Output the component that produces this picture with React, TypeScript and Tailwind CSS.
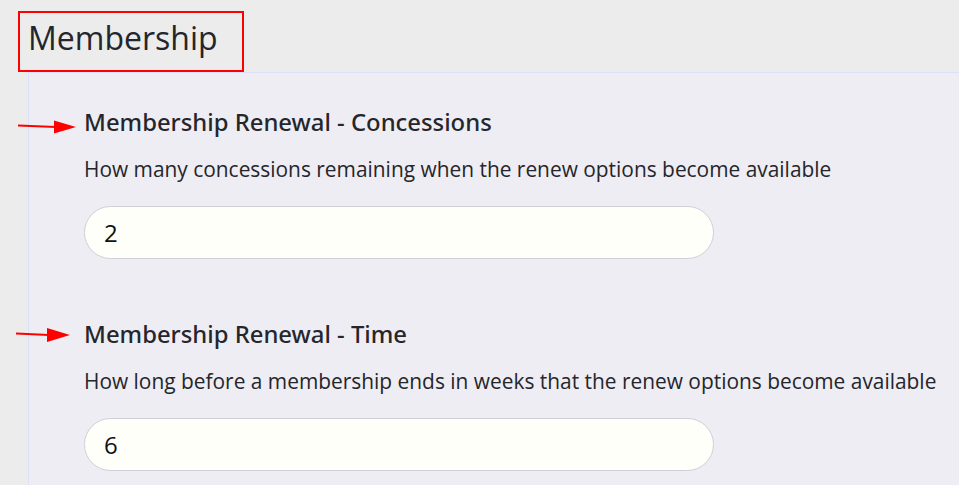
import React from 'react';

const font = { fontFamily: '"Open Sans", "Noto Sans", sans-serif' };
const headFont = { fontFamily: '"Noto Sans", "Open Sans", sans-serif' };

const Setting = ({ title, hint, value }: { title: string; hint: string; value: string }) => (
  <div className="pb-[59px]">
    <h3 className="text-[23.85px] font-medium text-[#25262b] leading-[32px]" style={headFont}>
      {title}
    </h3>
    <p className="mt-[17px] text-[20.9px] text-[#25262b] leading-[28px]">{hint}</p>
    <input
      defaultValue={value}
      className="block mt-[23px] w-[630px] h-[53px] rounded-full border border-[#cdd0d8] bg-[#fffffa] px-[19px] text-[24px] text-[#111] outline-none"
      style={font}
    />
  </div>
);

export default function App() {
  return (
    <div className="relative h-[485px] bg-[#ececec] overflow-hidden" style={font}>
      <div className="pl-[18px] pt-[11px]">
        <div className="w-[226px] h-[61px] border-2 border-[#ff0000] pl-[8px] pt-[9px]">
          <h1 className="text-[32px] text-[#23262b] leading-[32px]">Membership</h1>
        </div>
      </div>
      <div className="ml-[28px] border-l border-t border-[#dde0fa] bg-[#eeedf3] pl-[55px] pt-[33px]">
        <Setting
          title="Membership Renewal - Concessions"
          hint="How many concessions remaining when the renew options become available"
          value="2"
        />
        <Setting
          title="Membership Renewal - Time"
          hint="How long before a membership ends in weeks that the renew options become available"
          value="6"
        />
      </div>
      {/* annotation arrows */}
      <svg className="absolute left-0 top-0 pointer-events-none" width="100" height="360">
        <line x1="18" y1="125.5" x2="56" y2="127" stroke="#ff0000" strokeWidth="2" />
        <polygon points="54,120.5 76,127 54,133.5" fill="#ff0000" />
        <line x1="16" y1="333.5" x2="49" y2="335" stroke="#ff0000" strokeWidth="2" />
        <polygon points="47,328 70,335 47,342" fill="#ff0000" />
      </svg>
    </div>
  );
}
